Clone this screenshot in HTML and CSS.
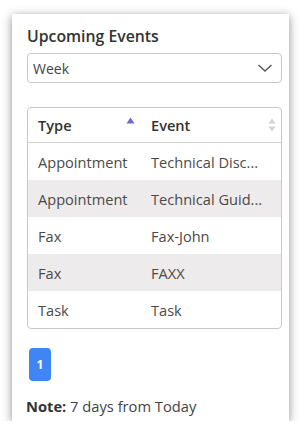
FILE: index.html
```html
<!DOCTYPE html>
<html>
<head>
<meta charset="utf-8">
<link rel="stylesheet" href="styles.css">
</head>
<body>
<div class="card">
  <h2 class="title">Upcoming Events</h2>
  <div class="select">
    <span>Week</span>
    <svg class="chev" width="16" height="10" viewBox="0 0 16 10"><path d="M1.5 2 L8 8 L14.5 2" fill="none" stroke="#555" stroke-width="1.4"/></svg>
  </div>
  <div class="grid">
    <div class="row head">
      <div class="cell c1">Type
        <svg class="sort-up" width="9" height="7" viewBox="0 0 9 7"><path d="M4.5 0.5 L8.5 6.5 L0.5 6.5 Z" fill="#6b6bd6"/></svg>
      </div>
      <div class="cell c2">Event
        <svg class="sort-both" width="8" height="14" viewBox="0 0 8 14"><path d="M4 0.5 L7.5 5.5 L0.5 5.5 Z M4 13.5 L7.5 8.5 L0.5 8.5 Z" fill="#d4d4d4"/></svg>
      </div>
    </div>
    <div class="row"><div class="cell c1">Appointment</div><div class="cell c2">Technical Disc...</div></div>
    <div class="row alt"><div class="cell c1">Appointment</div><div class="cell c2">Technical Guid...</div></div>
    <div class="row"><div class="cell c1">Fax</div><div class="cell c2">Fax-John</div></div>
    <div class="row alt"><div class="cell c1">Fax</div><div class="cell c2">FAXX</div></div>
    <div class="row last"><div class="cell c1">Task</div><div class="cell c2">Task</div></div>
  </div>
  <div class="pager"><span class="page">1</span></div>
  <p class="note"><b>Note:</b> 7 days from Today</p>
</div>
</body>
</html>
```
FILE: styles.css
```css
html, body { margin: 0; padding: 0; background: #fff; }
body { font-family: "Open Sans", "Liberation Sans", sans-serif; color: #4a4a4a; }
.card {
  margin: 14px 0 0 12px;
  width: 277px;
  height: 407px;
  box-sizing: border-box;
  padding: 10px 7px 0 15px;
  background: #fff;
  box-shadow: 0 2px 9px rgba(0,0,0,0.45);
}
.title {
  margin: 0;
  font-size: 15.8px;
  line-height: 24px;
  font-weight: 600;
  color: #333;
}
.select {
  margin-top: 5px;
  height: 30px;
  box-sizing: border-box;
  border: 1px solid #c8c8c8;
  border-radius: 4px;
  display: flex;
  align-items: center;
  justify-content: space-between;
  padding: 0 8px 0 5px;
  font-size: 14px;
  color: #444;
}
.chev { display: block; }
.grid {
  margin-top: 24px;
  border: 1px solid #c8c8c8;
  border-radius: 4px;
  overflow: hidden;
  font-size: 14.6px;
}
.row {
  display: flex;
  height: 37px;
  align-items: center;
}
.row.head {
  height: 34px;
  border-bottom: 1px solid #cfcfcf;
  font-weight: 600;
  color: #333;
}
.row.alt { background: #edebeb; }
.cell {
  box-sizing: border-box;
  padding-left: 10px;
  position: relative;
  white-space: nowrap;
}
.c1 { width: 113px; }
.c2 { flex: 1; }
.head .cell { display: flex; align-items: center; height: 34px; }
.sort-up { position: absolute; right: 6px; top: 9px; }
.sort-both { position: absolute; right: 5px; top: 10px; }
.pager { margin: 19px 0 0 2px; display: flex; }
.page {
  width: 22px;
  height: 33px;
  background: #3f86f4;
  color: #fff;
  border-radius: 4px;
  font-size: 12px;
  font-weight: 700;
  display: flex;
  align-items: center;
  justify-content: center;
}
.note {
  margin: 15px 0 0 -1px;
  font-size: 14.7px;
  line-height: 20px;
  color: #444;
}
.note b { color: #333; font-weight: 700; }
```
